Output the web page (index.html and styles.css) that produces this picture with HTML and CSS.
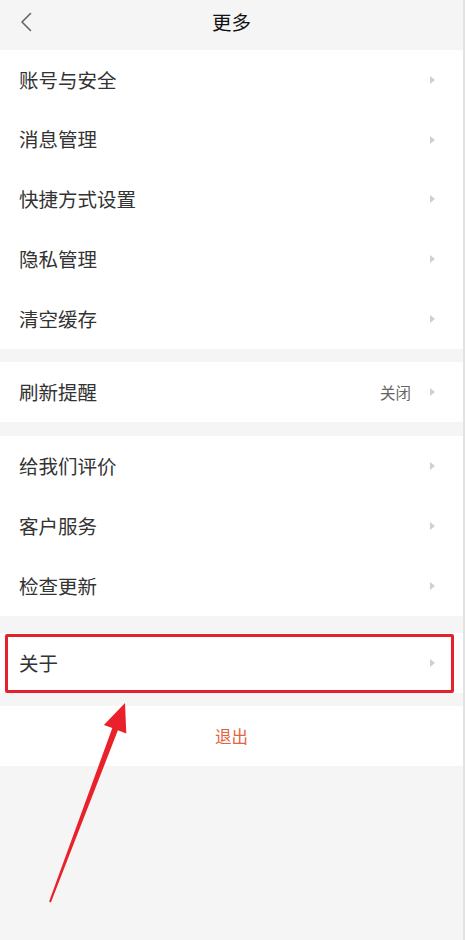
FILE: index.html
```html
<!DOCTYPE html>
<html lang="zh-CN">
<head>
<meta charset="utf-8">
<title>更多</title>
<link rel="stylesheet" href="styles.css">
</head>
<body>
<div class="page">
  <header class="topbar">
    <svg class="back" width="12" height="20" viewBox="0 0 12 20"><path d="M10.5 1.5 L2 10 L10.5 18.5" fill="none" stroke="#666" stroke-width="1.6" stroke-linecap="round" stroke-linejoin="round"/></svg>
    <h1 class="title">更多</h1>
  </header>

  <section class="group g1">
    <div class="row"><span class="label">账号与安全</span><span class="chev"></span></div>
    <div class="row"><span class="label">消息管理</span><span class="chev"></span></div>
    <div class="row"><span class="label">快捷方式设置</span><span class="chev"></span></div>
    <div class="row"><span class="label">隐私管理</span><span class="chev"></span></div>
    <div class="row"><span class="label">清空缓存</span><span class="chev"></span></div>
  </section>

  <section class="group g2">
    <div class="row"><span class="label">刷新提醒</span><span class="value">关闭</span><span class="chev"></span></div>
  </section>

  <section class="group g3">
    <div class="row"><span class="label">给我们评价</span><span class="chev"></span></div>
    <div class="row"><span class="label">客户服务</span><span class="chev"></span></div>
    <div class="row"><span class="label">检查更新</span><span class="chev"></span></div>
  </section>

  <section class="group g4">
    <div class="row"><span class="label">关于</span><span class="chev"></span></div>
  </section>

  <section class="group g5">
    <div class="row logout">退出</div>
  </section>

  <div class="highlight"></div>
  <svg class="pointer" width="465" height="940" viewBox="0 0 465 940">
    <polygon points="125,703 126.3,733.4 117.9,730.3 50.9,902.4 49.1,901.6 112.3,728.1 103.9,725" fill="#e8212b"/>
  </svg>
</div>
</body>
</html>
```
FILE: styles.css
```css
* { box-sizing: border-box; }
html, body { margin: 0; padding: 0; }
body {
  background: #f5f5f5;
  font-family: "Noto Sans CJK SC", "Noto Sans", sans-serif;
  width: 465px;
  height: 940px;
  overflow: hidden;
}
.page {
  position: relative;
  width: 465px;
  height: 940px;
  background: #f5f5f5;
  border-right: 2px solid #e2e2e2;
}
.topbar {
  height: 50px;
  display: flex;
  align-items: center;
  justify-content: center;
  position: relative;
}
.back {
  position: absolute;
  left: 20px;
  top: 12px;
}
.title {
  margin: 0;
  font-size: 19.5px;
  font-weight: 400;
  color: #111;
  line-height: 1;
  padding-bottom: 6px;
}
.group { background: #fff; }
.g2 { margin-top: 13px; }
.g3 { margin-top: 14px; }
.g4 { margin-top: 17px; }
.g5 { margin-top: 13px; }
.row {
  height: 60px;
  display: flex;
  align-items: center;
  padding: 0 28px 0 19px;
}
.g1 .row { height: 59.8px; }
.label {
  flex: 1;
  font-size: 19.5px;
  color: #333;
  line-height: 1;
  padding-bottom: 1px;
}
.value {
  font-size: 15.5px;
  color: #666;
  margin-right: 19px;
}
.chev {
  width: 0;
  height: 0;
  border-top: 4px solid transparent;
  border-bottom: 4px solid transparent;
  border-left: 5px solid #d0d0d0;
}
.logout {
  justify-content: center;
  font-size: 16.5px;
  color: #e8603f;
  padding: 0;
}
.highlight {
  position: absolute;
  left: 5px;
  top: 634px;
  width: 449px;
  height: 59px;
  border: 3px solid #e3222c;
  border-radius: 2px;
}
.pointer {
  position: absolute;
  left: 0;
  top: 0;
  pointer-events: none;
}
```
